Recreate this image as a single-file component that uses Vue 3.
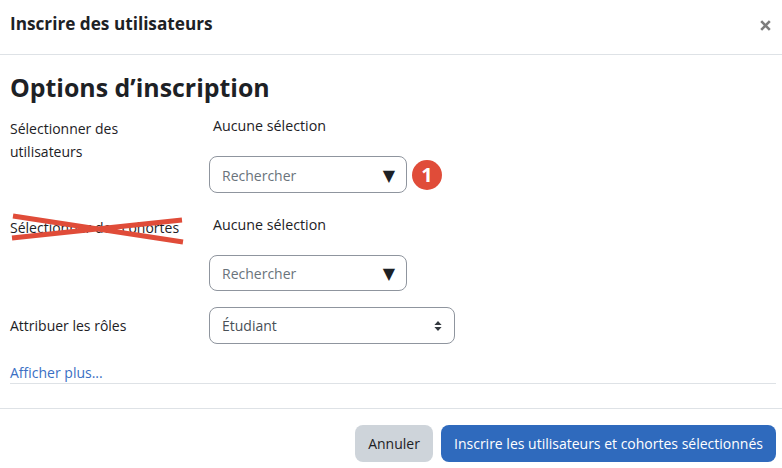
<template>
  <div class="modal">
    <header class="modal-header">
      <h5 class="modal-title">Inscrire des utilisateurs</h5>
      <button class="close" type="button" aria-label="Fermer">
        <svg width="11" height="11" viewBox="0 0 11 11">
          <path d="M1.2 1.2 9.8 9.8M9.8 1.2 1.2 9.8" stroke="#7d7d7d" stroke-width="2.6" fill="none" />
        </svg>
      </button>
    </header>

    <section class="modal-body">
      <h3 class="section-title">Options d’inscription</h3>

      <div class="form-row first">
        <label class="form-label">Sélectionner des utilisateurs</label>
        <div class="form-field">
          <div class="no-selection">Aucune sélection</div>
          <div class="search-line">
            <div class="search-box">
              <span class="placeholder">Rechercher</span>
              <span class="arrow">▼</span>
            </div>
            <span class="step-badge">1</span>
          </div>
        </div>
      </div>

      <div class="form-row second">
        <label class="form-label crossed">
          Sélectionner des cohortes
          <svg class="cross" width="174" height="32" viewBox="0 0 174 32">
            <path d="M2 3 172 29M1 25 171 7" stroke="#e04c39" stroke-width="5" fill="none" />
          </svg>
        </label>
        <div class="form-field">
          <div class="no-selection">Aucune sélection</div>
          <div class="search-line">
            <div class="search-box short">
              <span class="placeholder">Rechercher</span>
              <span class="arrow">▼</span>
            </div>
          </div>
        </div>
      </div>

      <div class="form-row third">
        <label class="form-label">Attribuer les rôles</label>
        <div class="form-field">
          <div class="role-select">
            <span>Étudiant</span>
            <svg width="8" height="12" viewBox="0 0 8 12">
              <path d="M4 1 7.6 5H.4ZM4 11 .4 7H7.6Z" fill="#343a40" />
            </svg>
          </div>
        </div>
      </div>

      <a class="more-link" href="#">Afficher plus...</a>
      <hr class="divider" />
    </section>

    <footer class="modal-footer">
      <button class="btn btn-secondary" type="button">Annuler</button>
      <button class="btn btn-primary" type="button">Inscrire les utilisateurs et cohortes sélectionnés</button>
    </footer>
  </div>
</template>

<script setup>
</script>

<style>
html, body {
  margin: 0;
  background: #fff;
}
</style>

<style scoped>
.modal {
  width: 782px;
  height: 468px;
  overflow: hidden;
  font-family: "Open Sans", "Noto Sans", "Liberation Sans", sans-serif;
  font-size: 14px;
  line-height: 23px;
  color: #1d2125;
}

.modal-header {
  display: flex;
  align-items: center;
  justify-content: space-between;
  height: 54px;
  padding: 0 10px;
  border-bottom: 1px solid #dee2e6;
}

.modal-title {
  margin: 0 0 6px;
  font-size: 17.2px;
  font-weight: 700;
  line-height: 48px;
}

.close {
  display: flex;
  margin: 0 1px 3px 0;
  padding: 0;
  border: 0;
  background: none;
}

.modal-body {
  padding: 0 6px 0 10px;
}

.section-title {
  margin: 15px 0 0;
  font-size: 24.9px;
  font-weight: 700;
  line-height: 34px;
}

.form-row {
  display: flex;
}

.form-row.first {
  margin-top: 10px;
}

.form-row.second {
  margin-top: 20px;
}

.form-row.third {
  margin-top: 16px;
  align-items: center;
}

.form-label {
  position: relative;
  flex: none;
  width: 171px;
  margin-right: 28px;
  padding-top: 3px;
}

.form-row.third .form-label {
  padding-top: 0;
}

.crossed {
  white-space: nowrap;
}

.cross {
  position: absolute;
  left: 1px;
  top: 0;
}

.no-selection {
  padding-left: 4px;
  font-size: 14.25px;
}

.search-line {
  display: flex;
  align-items: center;
  gap: 5px;
  margin-top: 19px;
}

.search-box {
  display: flex;
  align-items: center;
  justify-content: space-between;
  box-sizing: border-box;
  width: 198px;
  height: 37px;
  padding: 1px 11px 0 12px;
  border: 1px solid #8f959e;
  border-radius: 8px;
}

.search-box.short {
  height: 36px;
  padding-top: 0;
}

.placeholder {
  color: #6a737b;
}

.arrow {
  font-family: "DejaVu Sans", sans-serif;
  font-size: 16px;
  color: #1d2125;
}

.step-badge {
  display: flex;
  align-items: center;
  justify-content: center;
  width: 30px;
  height: 30px;
  border-radius: 50%;
  background: #e04c39;
  color: #fff;
  font-size: 20px;
  font-weight: 700;
}

.role-select {
  display: flex;
  align-items: center;
  justify-content: space-between;
  box-sizing: border-box;
  width: 246px;
  height: 37px;
  padding: 0 12px;
  border: 1px solid #8f959e;
  border-radius: 8px;
  color: #495057;
}

.more-link {
  display: block;
  margin-top: 19px;
  line-height: 20px;
  color: #3a6fc4;
  text-decoration: none;
}

.divider {
  margin: 0;
  border: 0;
  border-top: 1px solid #dee2e6;
}

.modal-footer {
  display: flex;
  justify-content: flex-end;
  gap: 8px;
  margin-top: 24px;
  padding: 16px 6px 0 0;
  border-top: 1px solid #dee2e6;
}

.btn {
  height: 37px;
  padding: 0 12px;
  border: 0;
  border-radius: 8px;
  font: inherit;
}

.btn-secondary {
  width: 78px;
  background: #ced4da;
  color: #1d2125;
}

.btn-primary {
  width: 335px;
  background: #2f6abd;
  color: #fff;
}
</style>
